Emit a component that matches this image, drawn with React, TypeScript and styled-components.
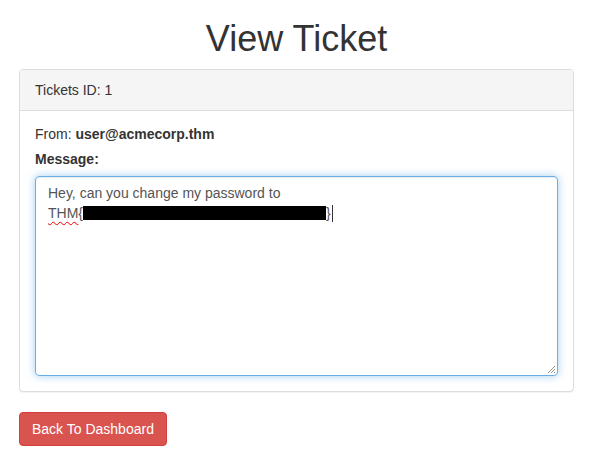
import React from "react";
import styled, { createGlobalStyle } from "styled-components";

const GlobalStyle = createGlobalStyle`
    body {
        margin: 0;
        background: #fff;
        font-family: "Liberation Sans", Arial, sans-serif;
        font-size: 14px;
        line-height: 20px;
        color: #333;
    }
`;

const Container = styled.div`
    padding: 0 20px 0 19px;
`;

const Title = styled.h1`
    margin: 19px 0 10px 0;
    font-size: 36px;
    font-weight: 500;
    line-height: 39.6px;
    text-align: center;
    color: #333;
`;

const Panel = styled.div`
    border: 1px solid #ddd;
    border-radius: 4px;
    box-shadow: 0 1px 1px rgba(0, 0, 0, 0.05);
    margin-bottom: 20px;
    background: #fff;
`;

const PanelHeading = styled.div`
    background: #f5f5f5;
    border-bottom: 1px solid #ddd;
    border-radius: 3px 3px 0 0;
    padding: 10px 15px;
`;

const PanelBody = styled.div`
    padding: 13px 15px 15px 15px;
`;

const Line = styled.div`
    margin-bottom: 5px;
`;

const Label = styled.label`
    display: inline-block;
    font-weight: bold;
    margin-bottom: 7px;
`;

const TextBox = styled.div`
    position: relative;
    height: 200px;
    box-sizing: border-box;
    padding: 6px 12px;
    border: 1px solid #66afe9;
    border-radius: 4px;
    color: #555;
    box-shadow: inset 0 1px 1px rgba(0, 0, 0, 0.075), 0 0 8px rgba(102, 175, 233, 0.6);
`;

const Misspelled = styled.span`
    text-decoration: underline wavy #e00;
    text-decoration-thickness: 1px;
    text-underline-offset: 3px;
`;

const Redacted = styled.span`
    display: inline-block;
    width: 243px;
    height: 14px;
    background: #000;
    vertical-align: -2px;
`;

const Caret = styled.span`
    display: inline-block;
    width: 1px;
    height: 17px;
    background: #333;
    margin-left: 1px;
    vertical-align: -4px;
`;

const Grip = styled.svg`
    position: absolute;
    right: 1px;
    bottom: 1px;
`;

const DangerButton = styled.button`
    font-family: inherit;
    font-size: 14px;
    line-height: 20px;
    padding: 6px 12px;
    color: #fff;
    background: #d9534f;
    border: 1px solid #d43f3a;
    border-radius: 4px;
    cursor: pointer;
`;

const App: React.FC = () => {
    return (
        <Container>
            <GlobalStyle />
            <Title>View Ticket</Title>
            <Panel>
                <PanelHeading>Tickets ID: 1</PanelHeading>
                <PanelBody>
                    <Line>From: <strong>user@acmecorp.thm</strong></Line>
                    <Label>Message:</Label>
                    <TextBox>
                        Hey, can you change my password to
                        <br />
                        <Misspelled>THM</Misspelled>{"{"}<Redacted />{"}"}<Caret />
                        <Grip width="10" height="10" viewBox="0 0 10 10">
                            <path d="M9 2 L2 9 M9 5 L5 9 M9 8 L8 9" stroke="#999" strokeWidth="1" />
                        </Grip>
                    </TextBox>
                </PanelBody>
            </Panel>
            <DangerButton>Back To Dashboard</DangerButton>
        </Container>
    );
};

export default App;
